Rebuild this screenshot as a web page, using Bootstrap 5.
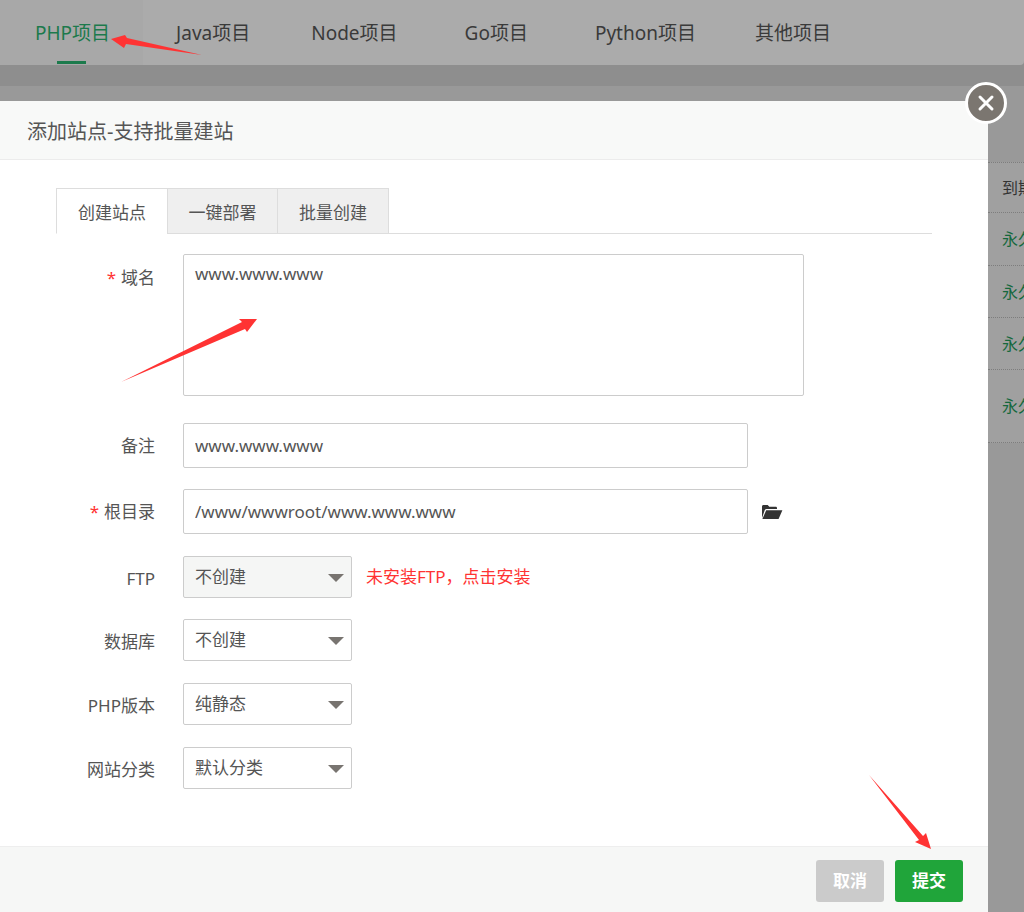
<!DOCTYPE html>
<html lang="zh-CN">
<head>
  <meta charset="UTF-8" />
  <meta name="viewport" content="width=device-width, initial-scale=1" />
  <title>添加站点</title>
  <link href="https://cdn.jsdelivr.net/npm/bootstrap@5.3.2/dist/css/bootstrap.min.css" rel="stylesheet" />
  <style>
    html, body {
      height: 912px;
      overflow: hidden;
    }

    body {
      background: #8e8e8e;
      font-family: "Noto Sans", "Noto Sans CJK SC", sans-serif;
      color: #555;
      position: relative;
    }

    /* page under the dialog */
    .top-tabs {
      height: 65px;
      background: #ababab;
      border-radius: 0 0 4px 4px;
      color: #3a3a3a;
      font-size: 19px;
    }

    .top-tab {
      padding: 0 34px 0 33px;
      line-height: 66px;
      position: relative;
    }

    .top-tab:nth-child(1) {
      padding-left: 35px;
      padding-right: 33px;
    }

    .top-tab:nth-child(2) {
      padding-right: 28px;
    }

    .top-tab:nth-child(5) {
      padding-right: 26px;
    }

    .top-tab.on {
      color: #1c7a4c;
      background: #a8a8a8;
    }

    .top-tab.on::after {
      content: "";
      position: absolute;
      left: 57px;
      width: 29px;
      bottom: 1px;
      height: 3px;
      background: #1c7a4c;
    }

    .under-panel {
      margin-top: 21px;
      height: 826px;
      background: #999;
      display: flex;
      flex-direction: column;
      align-items: flex-end;
    }

    .under-head {
      margin-top: 76px;
      width: 36px;
      height: 51px;
      padding-left: 14px;
      line-height: 50px;
      border-top: 1px dotted #7d7d7d;
      border-bottom: 1px dotted #7d7d7d;
      background: #a0a0a0;
      color: #333;
      font-size: 16px;
      white-space: nowrap;
      overflow: hidden;
    }

    .under-row {
      width: 36px;
      padding-left: 14px;
      border-bottom: 1px dotted #7d7d7d;
      color: #14683c;
      font-size: 16px;
      white-space: nowrap;
      overflow: hidden;
      display: flex;
      align-items: center;
      background: #a0a0a0;
    }

    /* dialog */
    .site-dialog {
      position: absolute;
      left: 0;
      top: 101px;
      width: 988px;
      height: 811px;
      background: #fff;
    }

    .dialog-head {
      height: 59px;
      padding-left: 27px;
      line-height: 62px;
      background: #f8f9f8;
      border-bottom: 1px solid #ececec;
      font-size: 20px;
      color: #555;
    }

    .dialog-close {
      position: absolute;
      left: 965px;
      top: -19px;
      width: 42px;
      height: 42px;
      padding: 0;
      border: 3px solid #fff;
      border-radius: 50%;
      background: #7b7670;
      display: flex;
      align-items: center;
      justify-content: center;
    }

    .dialog-body {
      height: 686px;
      padding: 28px 56px 0;
    }

    .form-tabs {
      width: 876px;
      height: 46px;
      border-bottom: 1px solid #ddd;
    }

    .form-tab {
      width: 111px;
      height: 46px;
      margin-right: -1px;
      border: 1px solid #ddd;
      background: #efefef;
      color: #555;
      font-size: 17px;
      line-height: 47px;
      text-align: center;
    }

    .form-tab.on {
      width: 112px;
      background: #fff;
      border-bottom-color: #fff;
    }

    .form-tab:last-child {
      width: 112px;
    }

    .site-form {
      font-size: 17px;
    }

    .field-row {
      display: flex;
      align-items: flex-start;
    }

    .field-label {
      width: 99px;
      flex: none;
      text-align: right;
      line-height: 45px;
      color: #555;
      margin: 0 28px 0 0;
      white-space: nowrap;
    }

    .field-row:first-child .field-label {
      line-height: 47px;
    }

    .field-label i {
      color: #f33;
      font-style: normal;
      margin-right: 5px;
    }

    .field-text {
      height: 45px;
      width: 565px;
      padding: 0 11px;
      border: 1px solid #ccc;
      border-radius: 2px;
      color: #555;
      font-size: 17px;
      background: #fff;
    }

    .field-area {
      display: block;
      width: 621px;
      height: 142px;
      padding: 6px 11px;
      border: 1px solid #ccc;
      border-radius: 2px;
      color: #555;
      font-size: 17px;
      line-height: 26px;
      resize: none;
      background: #fff;
    }

    .field-select {
      position: relative;
      width: 169px;
      height: 42px;
      padding: 0 11px;
      line-height: 40px;
      border: 1px solid #ccc;
      border-radius: 2px;
      color: #555;
      background: #fff;
    }

    .field-select.off {
      background: #f5f6f5;
    }

    .field-select::after {
      content: "";
      position: absolute;
      right: 7px;
      top: 17px;
      border-left: 8px solid transparent;
      border-right: 8px solid transparent;
      border-top: 8px solid #787470;
    }

    .ftp-tip {
      color: #f33;
      line-height: 42px;
      margin-left: 14px;
    }

    .folder-icon {
      margin: 15px 0 0 13px;
    }

    .dialog-foot {
      height: 66px;
      padding: 13px 25px 0 0;
      background: #f6f7f6;
      border-top: 1px solid #eee;
      gap: 11px;
    }

    .foot-btn {
      width: 68px;
      height: 42px;
      padding: 0;
      border: 0;
      border-radius: 3px;
      color: #fff;
      font-size: 17px;
      font-weight: 700;
    }

    .foot-btn.cancel {
      background: #cbcbcb;
    }

    .foot-btn.submit {
      background: #20a53a;
    }

    .red-arrows {
      position: absolute;
      left: 0;
      top: 0;
      pointer-events: none;
    }
  </style>
</head>
<body>
  <!-- Page behind the dialog -->
  <div class="top-tabs d-flex">
    <div class="top-tab on">PHP项目</div>
    <div class="top-tab">Java项目</div>
    <div class="top-tab">Node项目</div>
    <div class="top-tab">Go项目</div>
    <div class="top-tab">Python项目</div>
    <div class="top-tab">其他项目</div>
  </div>
  <div class="under-panel">
    <div class="under-head">到期时间</div>
    <div class="under-row" style="height: 53px">永久</div>
    <div class="under-row" style="height: 52px">永久</div>
    <div class="under-row" style="height: 52px">永久</div>
    <div class="under-row" style="height: 73px">永久</div>
  </div>

  <!-- Dialog -->
  <div class="site-dialog">
    <div class="dialog-head">添加站点-支持批量建站</div>
    <button class="dialog-close" type="button" aria-label="关闭">
      <svg width="18" height="18" viewBox="0 0 18 18"><path d="M3 3l12 12M15 3L3 15" stroke="#fff" stroke-width="3" stroke-linecap="round"/></svg>
    </button>

    <div class="dialog-body">
      <div class="form-tabs d-flex">
        <div class="form-tab on">创建站点</div>
        <div class="form-tab">一键部署</div>
        <div class="form-tab">批量创建</div>
      </div>

      <form class="site-form d-flex flex-column">
        <div class="field-row mt-3 pt-1">
          <label class="field-label"><i>*</i>域名</label>
          <textarea class="field-area">www.www.www</textarea>
        </div>
        <div class="field-row" style="margin-top: 27px">
          <label class="field-label">备注</label>
          <input class="field-text" value="www.www.www" />
        </div>
        <div class="field-row" style="margin-top: 21px">
          <label class="field-label"><i>*</i>根目录</label>
          <input class="field-text" value="/www/wwwroot/www.www.www" />
          <svg class="folder-icon" width="22" height="16" viewBox="0 0 22 16"><path d="M1 14V2.5C1 1.6 1.6 1 2.5 1h4.2l1.6 1.8h6.2c.9 0 1.5.5 1.5 1.4V5H5.6c-.8 0-1.4.4-1.8 1.1L1 14z" fill="#333"/><path d="M5.2 6.2H21.4L17.6 15H1.4z" fill="#333"/></svg>
        </div>
        <div class="field-row" style="margin-top: 22px">
          <label class="field-label">FTP</label>
          <div class="field-select off">不创建</div>
          <span class="ftp-tip">未安装FTP，点击安装</span>
        </div>
        <div class="field-row" style="margin-top: 18px">
          <label class="field-label">数据库</label>
          <div class="field-select">不创建</div>
        </div>
        <div class="field-row" style="margin-top: 19px">
          <label class="field-label">PHP版本</label>
          <div class="field-select">纯静态</div>
        </div>
        <div class="field-row" style="margin-top: 19px">
          <label class="field-label">网站分类</label>
          <div class="field-select">默认分类</div>
        </div>
      </form>
    </div>

    <div class="dialog-foot d-flex justify-content-end">
      <button class="foot-btn cancel" type="button">取消</button>
      <button class="foot-btn submit" type="button">提交</button>
    </div>
  </div>

  <!-- Annotation arrows -->
  <svg class="red-arrows" width="1024" height="912" viewBox="0 0 1024 912">
    <path d="M111 39L125 35 127 38 202 55 126 44 124 48z" fill="#f33"/>
    <path d="M121 382L242 322 239 319H257L247 332 245 329z" fill="#f33"/>
    <path d="M869 775L923 836 926 833 931 849 915 842 919 840z" fill="#f33"/>
  </svg>
</body>
</html>
